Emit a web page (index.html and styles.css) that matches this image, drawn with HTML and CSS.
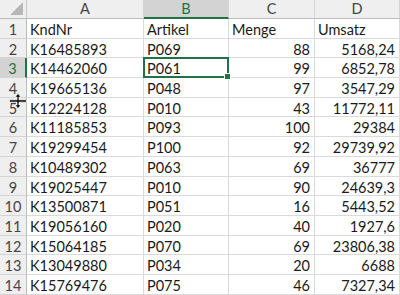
FILE: index.html
```html
<!DOCTYPE html>
<html lang="de">
<head>
  <meta charset="utf-8">
  <title>Tabelle1</title>
  <link rel="stylesheet" href="styles.css">
</head>
<body>
  <div class="sheet">
    <!-- column headers -->
    <div class="corner"></div>
    <div class="colhead">A</div>
    <div class="colhead active">B</div>
    <div class="colhead">C</div>
    <div class="colhead">D</div>

    <div class="rowhead">1</div>
    <div class="cell">KndNr</div><div class="cell">Artikel</div><div class="cell">Menge</div><div class="cell">Umsatz</div>

    <div class="rowhead">2</div>
    <div class="cell">K16485893</div><div class="cell">P069</div><div class="cell num">88</div><div class="cell num">5168,24</div>

    <div class="rowhead active">3</div>
    <div class="cell">K14462060</div><div class="cell selected">P061</div><div class="cell num">99</div><div class="cell num">6852,78</div>

    <div class="rowhead">4</div>
    <div class="cell">K19665136</div><div class="cell">P048</div><div class="cell num">97</div><div class="cell num">3547,29</div>

    <div class="rowhead">5
      <!-- row-resize mouse cursor over the 4/5 boundary -->
      <svg class="cursor" width="18" height="16" viewBox="0 0 18 16">
        <path d="M9 0.5 L12 4 L10 4 L10 6.8 L17.5 6.8 L17.5 9.2 L10 9.2 L10 12 L12 12 L9 15.5 L6 12 L8 12 L8 9.2 L0.5 9.2 L0.5 6.8 L8 6.8 L8 4 L6 4 Z" fill="#111" stroke="#fff" stroke-width="0.7"/>
      </svg>
    </div>
    <div class="cell">K12224128</div><div class="cell">P010</div><div class="cell num">43</div><div class="cell num">11772,11</div>

    <div class="rowhead">6</div>
    <div class="cell">K11185853</div><div class="cell">P093</div><div class="cell num">100</div><div class="cell num">29384</div>

    <div class="rowhead">7</div>
    <div class="cell">K19299454</div><div class="cell">P100</div><div class="cell num">92</div><div class="cell num">29739,92</div>

    <div class="rowhead">8</div>
    <div class="cell">K10489302</div><div class="cell">P063</div><div class="cell num">69</div><div class="cell num">36777</div>

    <div class="rowhead">9</div>
    <div class="cell">K19025447</div><div class="cell">P010</div><div class="cell num">90</div><div class="cell num">24639,3</div>

    <div class="rowhead">10</div>
    <div class="cell">K13500871</div><div class="cell">P051</div><div class="cell num">16</div><div class="cell num">5443,52</div>

    <div class="rowhead">11</div>
    <div class="cell">K19056160</div><div class="cell">P020</div><div class="cell num">40</div><div class="cell num">1927,6</div>

    <div class="rowhead">12</div>
    <div class="cell">K15064185</div><div class="cell">P070</div><div class="cell num">69</div><div class="cell num">23806,38</div>

    <div class="rowhead">13</div>
    <div class="cell">K13049880</div><div class="cell">P034</div><div class="cell num">20</div><div class="cell num">6688</div>

    <div class="rowhead">14</div>
    <div class="cell">K15769476</div><div class="cell">P075</div><div class="cell num">46</div><div class="cell num">7327,34</div>
  </div>
</body>
</html>
```

FILE: styles.css
```css
html, body {
  margin: 0;
  padding: 0;
  background: #fff;
  overflow: hidden;
}

.sheet {
  display: grid;
  grid-template-columns: 27px 117px 85px 86px 85px;
  grid-template-rows: 19px;
  grid-auto-rows: 19.7px;
  font-family: Lato, "Open Sans", sans-serif;
  font-size: 14.5px;
  color: #1a1a1a;
  width: 400px;
}

/* top-left select-all box */
.corner {
  position: relative;
  background: #efefef;
  border-right: 1px solid #c9c9c9;
  border-bottom: 1px solid #bcbcbc;
}
.corner::after {
  content: "";
  position: absolute;
  right: 3px;
  bottom: 3px;
  border-style: solid;
  border-width: 0 0 13px 13px;
  border-color: transparent transparent #b7b7b7 transparent;
}

.colhead {
  background: #efefef;
  color: #444;
  text-align: center;
  line-height: 18px;
  border-right: 1px solid #d4d4d4;
  border-bottom: 1px solid #bcbcbc;
}
.colhead.active {
  background: #d3d3d3;
  color: #217346;
  border-bottom: 2px solid #217346;
  line-height: 17px;
}

.rowhead {
  position: relative;
  background: #efefef;
  color: #444;
  text-align: center;
  line-height: 19px;
  padding-top: 1px;
  box-sizing: border-box;
  border-right: 1px solid #bcbcbc;
  border-bottom: 1px solid #d4d4d4;
}
.rowhead.active {
  background: #d3d3d3;
  color: #217346;
  border-right: 2px solid #217346;
}

.cursor {
  position: absolute;
  left: 9px;
  top: -5px;
}

.cell {
  position: relative;
  padding: 0 4px 0 3px;
  line-height: 19px;
  padding-top: 1px;
  box-sizing: border-box;
  white-space: nowrap;
  border-right: 1px solid #dadada;
  border-bottom: 1px solid #dadada;
}
.cell.num {
  text-align: right;
}

.cell.selected::after {
  content: "";
  position: absolute;
  left: -1px;
  top: -1px;
  right: -1px;
  bottom: -1px;
  border: 2px solid #217346;
}
.cell.selected::before {
  content: "";
  position: absolute;
  right: -3px;
  bottom: -3px;
  width: 5px;
  height: 5px;
  background: #217346;
  border: 1px solid #fff;
  z-index: 1;
}
```
